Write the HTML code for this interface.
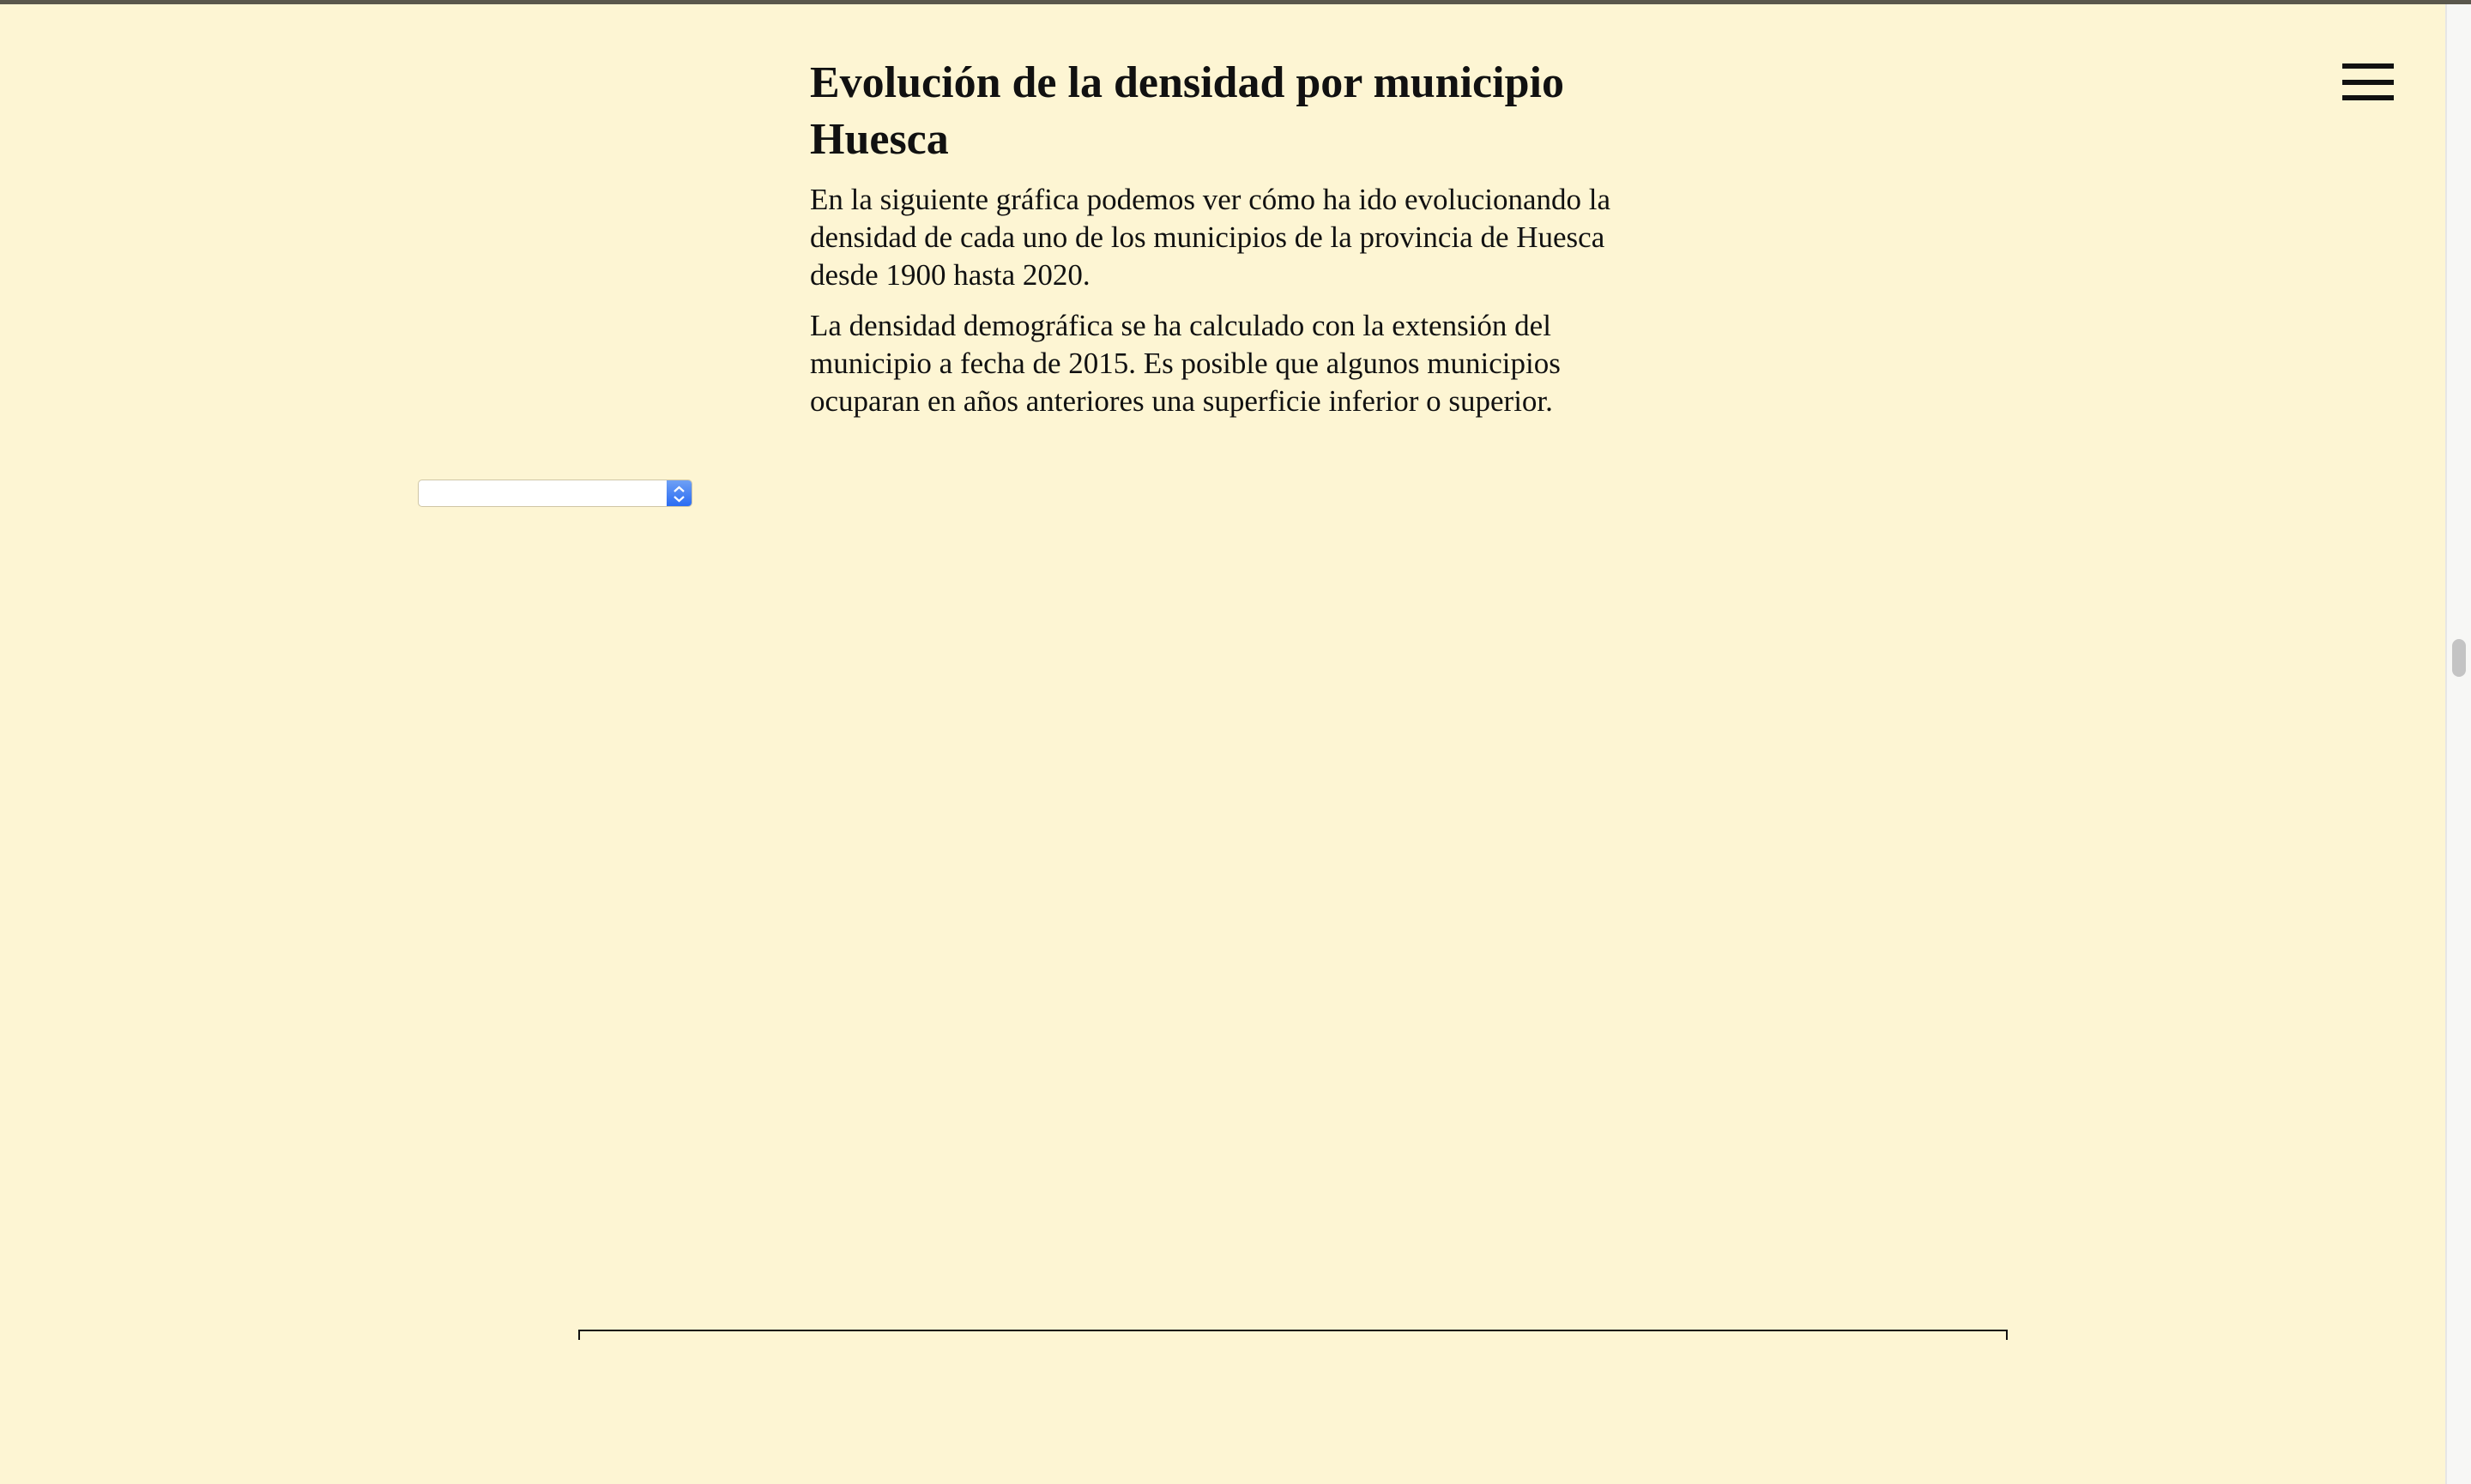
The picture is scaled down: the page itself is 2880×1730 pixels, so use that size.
<!DOCTYPE html>
<html><head><meta charset="utf-8"><style>
html,body{margin:0;padding:0}
body{width:2880px;height:1730px;background:#fdf5d3;position:relative;overflow:hidden;font-family:"Liberation Serif",serif;color:#111}
.top{position:absolute;left:0;top:0;width:2880px;height:5px;background:#5a574c}
.sb{position:absolute;left:2850px;top:5px;width:30px;height:1725px;background:#f7f7f5;border-left:2px solid #e6e6e6}
.thumb{position:absolute;left:2858px;top:745px;width:16px;height:44px;border-radius:8px;background:#c4c4c4}
.hb{position:absolute;left:2730px;width:60px;height:6px;background:#111}
h1{position:absolute;left:944px;top:64px;margin:0;font-size:52px;line-height:66px;font-weight:bold;white-space:nowrap}
.p{position:absolute;left:944px;font-size:35px;line-height:44px;white-space:nowrap}
.sel{position:absolute;left:487px;top:559px;width:320px;height:32px;background:#fff;border:1px solid #cfc6a6;border-radius:5px;box-sizing:border-box;overflow:hidden}
.sel .b{position:absolute right:0;position:absolute;right:0;top:0;width:29px;height:100%;background:linear-gradient(#6ea0f5,#2a6cf3)}
.line{position:absolute;left:674px;top:1550px;width:1666px;height:12px;border:2px solid #111;border-bottom:none;box-sizing:border-box}
</style></head><body>
<div class="top"></div>
<div class="sb"></div><div class="thumb"></div>
<div class="hb" style="top:74px"></div><div class="hb" style="top:93px"></div><div class="hb" style="top:111px"></div>
<h1>Evolución de la densidad por municipio<br>Huesca</h1>
<div class="p" style="top:211px">En la siguiente gráfica podemos ver cómo ha ido evolucionando la<br>densidad de cada uno de los municipios de la provincia de Huesca<br>desde 1900 hasta 2020.</div>
<div class="p" style="top:358px">La densidad demográfica se ha calculado con la extensión del<br>municipio a fecha de 2015. Es posible que algunos municipios<br>ocuparan en años anteriores una superficie inferior o superior.</div>
<div class="sel"><div class="b"><svg width="29" height="32" viewBox="0 0 29 32"><path d="M9 13l5.5-5 5.5 5M9 19l5.5 5 5.5-5" fill="none" stroke="#fff" stroke-width="2.2"/></svg></div></div>
<div class="line"></div>
</body></html>
